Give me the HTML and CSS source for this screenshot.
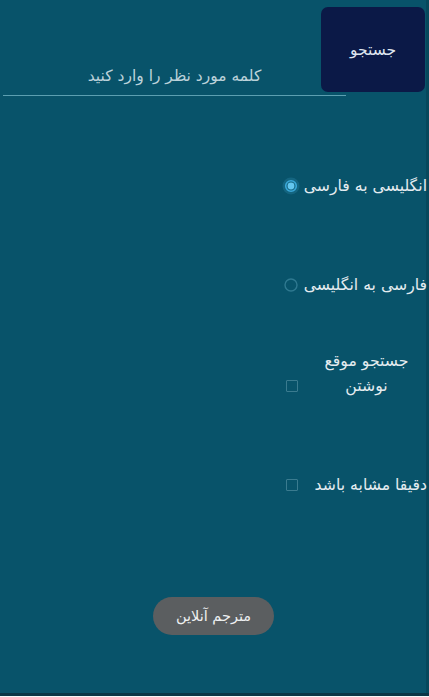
FILE: index.html
```html
<!DOCTYPE html>
<html lang="fa" dir="rtl">
<head>
<meta charset="utf-8">
<title>مترجم</title>
<link rel="stylesheet" href="styles.css">
</head>
<body>
<div class="screen">
  <div class="top">
    <div class="search-btn">جستجو</div>
    <div class="field"><span class="placeholder">کلمه مورد نظر را وارد کنید</span></div>
  </div>

  <div class="opt opt-1">
    <span class="label">انگلیسی به فارسی</span>
    <svg class="ctl" width="18" height="18" viewBox="0 0 18 18">
      <circle cx="9" cy="9" r="8.5" fill="#2b86a8" fill-opacity="0.35"/>
      <circle cx="9" cy="9" r="5.3" fill="none" stroke="#3aa8d8" stroke-width="1.6"/>
      <circle cx="9" cy="9" r="3.4" fill="#63c6ee"/>
    </svg>
  </div>

  <div class="opt opt-2">
    <span class="label">فارسی به انگلیسی</span>
    <svg class="ctl" width="18" height="18" viewBox="0 0 18 18">
      <circle cx="9" cy="9" r="6" fill="none" stroke="#2f7990" stroke-width="1.4"/>
    </svg>
  </div>

  <div class="opt opt-3">
    <span class="label label-wrap">جستجو موقع<br>نوشتن</span>
    <span class="box"></span>
  </div>

  <div class="opt opt-4">
    <span class="label">دقیقا مشابه باشد</span>
    <span class="box"></span>
  </div>

  <div class="pill">مترجم آنلاین</div>
</div>
</body>
</html>
```

FILE: styles.css
```css
html {
  background: #f4f6f7;
}
body {
  margin: 0;
  font-family: "DejaVu Sans", "Noto Sans", sans-serif;
}
.screen {
  width: 429px;
  height: 693px;
  background: #08536a;
  box-shadow: inset -3px 0 0 #06485c;
  border-bottom: 3px solid #0a3646;
  display: flex;
  flex-direction: column;
  overflow: hidden;
}
.top {
  display: flex;
  align-items: flex-start;
  padding-top: 7px;
  height: 89px;
}
.search-btn {
  width: 104px;
  height: 85px;
  margin-right: 4px;
  background: #0b1947;
  border-radius: 7px;
  color: #dfe6f0;
  font-size: 15.5px;
  display: flex;
  align-items: center;
  justify-content: center;
  flex-shrink: 0;
  position: relative;
  z-index: 1;
}
.field {
  width: 343px;
  height: 29px;
  margin-top: 59px;
  margin-right: -25px;
  border-bottom: 1px solid #5c9fb1;
  display: flex;
  align-items: center;
  justify-content: center;
}
.placeholder {
  color: #bcd2da;
  font-size: 15.5px;
  margin-top: -10px;
}
.opt {
  display: flex;
  align-items: center;
  padding-right: 2px;
  color: #e4ecf0;
  font-size: 15.7px;
}
.label {
  line-height: 24px;
  width: 127px;
  flex-shrink: 0;
  text-align: right;
  white-space: nowrap;
}
.opt-1 {
  margin-top: 78px;
  height: 24px;
}
.opt-2 {
  margin-top: 75px;
  height: 24px;
}
.opt-3 {
  margin-top: 51px;
  height: 50px;
  align-items: flex-end;
}
.label-wrap {
  width: 121px;
  margin-left: 8px;
  text-align: center;
  line-height: 25px;
}
.opt-3 .box {
  margin-bottom: 6px;
}
.opt-4 {
  margin-top: 75px;
  height: 24px;
}
.ctl {
  display: block;
  flex-shrink: 0;
}
.box {
  width: 10px;
  height: 10px;
  border: 1px solid #3a7b8f;
  border-radius: 1px;
  flex-shrink: 0;
}
.opt-4 .label {
  width: 129px;
}
.pill {
  margin: 100px auto 0;
  width: 121px;
  height: 38px;
  border-radius: 19px;
  background: #5b5e60;
  color: #eef0f1;
  font-size: 14.5px;
  display: flex;
  align-items: center;
  justify-content: center;
  position: relative;
  left: -1px;
}
```
